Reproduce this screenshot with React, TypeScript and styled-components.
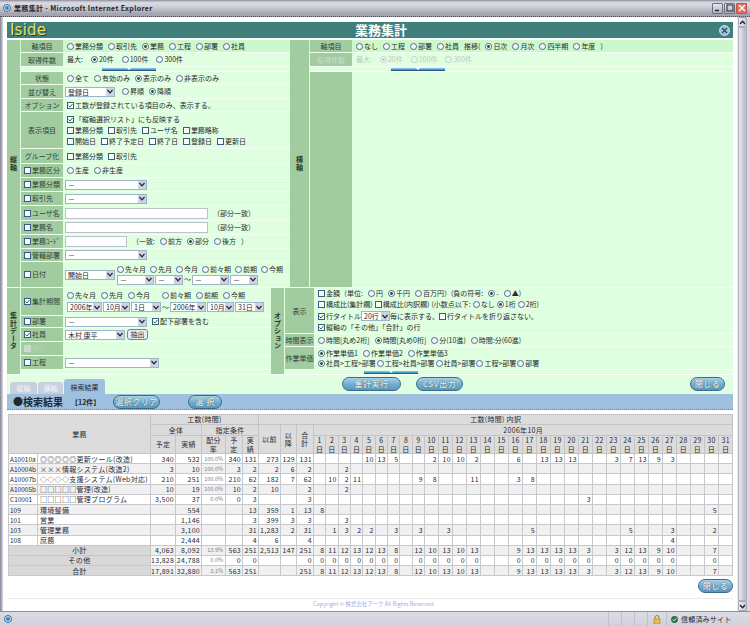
import styled, { createGlobalStyle } from "styled-components"

const FONT = `"Noto Sans CJK JP", "Liberation Sans", sans-serif`

const GlobalStyle = createGlobalStyle`
  html, body {
    margin: 0;
    padding: 0;
    overflow: hidden;
    background: #d8d8e0;
  }
  * {
    box-sizing: border-box;
  }
`

type Days = Record<number, number>

interface RowData {
  code: string
  name: string
  plan?: string
  actual?: string
  rate?: string
  plan2?: string
  actual2?: string
  before?: string
  after?: string
  total?: string
  days: Days
}

const ROWS: RowData[] = [
  { code: "A10010a", name: "◎◎◎◎◎更新ツール(改造)", plan: "340", actual: "532", rate: "100.0%", plan2: "340", actual2: "131", before: "273", after: "129", total: "131", days: { 5: 10, 6: 13, 7: 5, 10: 2, 11: 10, 12: 10, 13: 2, 16: 6, 18: 13, 19: 13, 20: 13, 23: 3, 24: 7, 25: 13, 26: 9, 27: 3 } },
  { code: "A10004b", name: "×××情報システム(改造2)", plan: "3", actual: "10", rate: "100.0%", plan2: "3", actual2: "2", before: "2", after: "6", total: "2", days: { 3: 2 } },
  { code: "A10007b", name: "◇◇◇◇支援システム(Web対応)", plan: "210", actual: "251", rate: "100.0%", plan2: "210", actual2: "62", before: "182", after: "7", total: "62", days: { 2: 10, 3: 2, 4: 11, 9: 9, 10: 8, 13: 11, 16: 3, 17: 8 } },
  { code: "A10005b", name: "□□□□□管理(改造)", plan: "10", actual: "19", rate: "100.0%", plan2: "10", actual2: "2", before: "10", total: "2", days: { 3: 2 } },
  { code: "C10001", name: "□□□□□管理プログラム", plan: "3,500", actual: "37", rate: "0.0%", plan2: "0", actual2: "3", total: "3", days: { 21: 3 } },
  { code: "109", name: "環境整備", actual: "554", actual2: "13", before: "359", after: "1", total: "13", days: { 1: 8, 30: 5 } },
  { code: "101", name: "営業", actual: "1,146", actual2: "3", before: "399", after: "3", total: "3", days: { 3: 3 } },
  { code: "103", name: "管理業務", actual: "3,100", actual2: "31", before: "1,283", after: "2", total: "31", days: { 2: 1, 3: 3, 4: 2, 5: 2, 7: 3, 9: 3, 11: 3, 17: 5, 24: 5, 27: 3, 30: 2 } },
  { code: "108", name: "庶務", actual: "2,444", actual2: "4", before: "6", total: "4", days: { 27: 4 } },
]

const SUM_DAYS: Days = { 1: 8, 2: 11, 3: 12, 4: 13, 5: 12, 6: 13, 7: 8, 9: 12, 10: 10, 11: 13, 12: 10, 13: 13, 16: 9, 17: 13, 18: 13, 19: 13, 20: 13, 21: 3, 23: 3, 24: 12, 25: 13, 26: 9, 27: 10, 30: 7 }
const ZERO_DAYS: Days = Object.fromEntries(Object.keys(SUM_DAYS).map((k) => [k, 0]))

const TOTALS = [
  { name: "小計", plan: "4,063", actual: "8,092", rate: "13.9%", plan2: "563", actual2: "251", before: "2,513", after: "147", total: "251", days: SUM_DAYS },
  { name: "その他", plan: "13,828", actual: "24,788", rate: "0.0%", plan2: "0", actual2: "0", before: "", after: "", total: "0", days: ZERO_DAYS },
  { name: "合計", plan: "17,891", actual: "32,880", rate: "3.1%", plan2: "563", actual2: "251", before: "", after: "", total: "251", days: SUM_DAYS },
]

const DAY_LIST = Array.from({ length: 31 }, (_, i) => i + 1)
const COL_WIDTHS = [29, 113, 25, 26, 24, 17, 16, 22, 16, 17]

function Radio({ on, muted, children }: { on?: boolean; muted?: boolean; children?: React.ReactNode }) {
  return (
    <Opt $muted={muted}>
      <RadioMark $on={on} $muted={muted} />
      {children}
    </Opt>
  )
}

function Check({ on, muted, children }: { on?: boolean; muted?: boolean; children?: React.ReactNode }) {
  return (
    <Opt $muted={muted}>
      <CheckMark $muted={muted}>
        {on && (
          <svg width="5" height="5" viewBox="0 0 5 5">
            <path d="M0.5 2.5 L2 4 L4.5 1" fill="none" stroke="#2a7a2a" strokeWidth="1" />
          </svg>
        )}
      </CheckMark>
      {children}
    </Opt>
  )
}

function Select({ w, children }: { w: number; children?: React.ReactNode }) {
  return (
    <SelectBox $w={w}>
      <SelectValue>{children}</SelectValue>
      <SelectArrow>
        <svg width="6" height="5" viewBox="0 0 6 5">
          <path d="M0.5 1 L3 3.8 L5.5 1" fill="none" stroke="#223" strokeWidth="1.2" />
        </svg>
      </SelectArrow>
    </SelectBox>
  )
}

function Splitter({ left }: { left: number }) {
  return (
    <SplitRow $left={left}>
      <SplitBar />
    </SplitRow>
  )
}

function DayCells({ days }: { days: Days }) {
  return (
    <>
      {DAY_LIST.map((d) => (
        <Num key={d}>{days[d]}</Num>
      ))}
    </>
  )
}

export default function App() {
  return (
    <>
      <GlobalStyle />
      <Window>
        <TitleBar>
          <IeIcon />
          <TitleText>業務集計 - Microsoft Internet Explorer</TitleText>
          <WinButtons>
            <WinButton>
              <svg width="8" height="8" viewBox="0 0 8 8">
                <path d="M1 6.5 H5" stroke="#223" strokeWidth="1.4" />
              </svg>
            </WinButton>
            <WinButton>
              <svg width="8" height="8" viewBox="0 0 8 8">
                <rect x="1" y="1" width="6" height="6" fill="none" stroke="#223" strokeWidth="1" />
              </svg>
            </WinButton>
            <WinButton $close>
              <svg width="8" height="8" viewBox="0 0 8 8">
                <path d="M1 1 L7 7 M7 1 L1 7" stroke="#fff" strokeWidth="1.4" />
              </svg>
            </WinButton>
          </WinButtons>
        </TitleBar>

        <Client>
          <Page>
            <Header>
              <Logo>Iside</Logo>
              <HeaderTitle>業務集計</HeaderTitle>
              <HeaderClose>
                <svg width="11" height="11" viewBox="0 0 11 11">
                  <circle cx="5.5" cy="5.5" r="5" fill="#9cc4d8" stroke="#dcecf4" strokeWidth="0.8" />
                  <path d="M3 3 L8 8 M8 3 L3 8" stroke="#2c4a5c" strokeWidth="1.2" />
                </svg>
              </HeaderClose>
            </Header>

            <AxisPanel>
              <SideLabel $w={13}>縦軸</SideLabel>
              <Rows $w={270}>
                <Row $h={13} $strong>
                  <RowLabel $center>軸項目</RowLabel>
                  <RowBody>
                    <Radio>業務分類</Radio>
                    <Radio>取引先</Radio>
                    <Radio on>業務</Radio>
                    <Radio>工程</Radio>
                    <Radio>部署</Radio>
                    <Radio>社員</Radio>
                  </RowBody>
                </Row>
                <Row $h={14}>
                  <RowLabel $center>取得件数</RowLabel>
                  <RowBody $gap={8}>
                    <Plain>最大:</Plain>
                    <Radio on>20件</Radio>
                    <Radio>100件</Radio>
                    <Radio>300件</Radio>
                  </RowBody>
                </Row>
                <Splitter left={39} />
                <Row $h={13}>
                  <RowLabel $center>状態</RowLabel>
                  <RowBody>
                    <Radio>全て</Radio>
                    <Radio>有効のみ</Radio>
                    <Radio on>表示のみ</Radio>
                    <Radio>非表示のみ</Radio>
                  </RowBody>
                </Row>
                <Row $h={14}>
                  <RowLabel $center>並び替え</RowLabel>
                  <RowBody $tight>
                    <Select w={50}>登録日</Select>
                    <RadioPair>
                      <Radio>昇順</Radio>
                      <Radio on>降順</Radio>
                    </RadioPair>
                  </RowBody>
                </Row>
                <Row $h={13}>
                  <RowLabel $center>オプション</RowLabel>
                  <RowBody>
                    <Check on>工数が登録されている項目のみ、表示する。</Check>
                  </RowBody>
                </Row>
                <Row $h={37}>
                  <RowLabel $center>表示項目</RowLabel>
                  <RowStackBody>
                    <Line>
                      <Check on>「縦軸選択リスト」にも反映する</Check>
                    </Line>
                    <Line>
                      <Check>業務分類</Check>
                      <Check>取引先</Check>
                      <Check>ユーザ名</Check>
                      <Check>業務略称</Check>
                    </Line>
                    <Line>
                      <Check>開始日</Check>
                      <Check>終了予定日</Check>
                      <Check>終了日</Check>
                      <Check>登録日</Check>
                      <Check>更新日</Check>
                    </Line>
                  </RowStackBody>
                </Row>
                <Row $h={15}>
                  <RowLabel $center>グループ化</RowLabel>
                  <RowBody>
                    <Check>業務分類</Check>
                    <Check>取引先</Check>
                  </RowBody>
                </Row>
                <Row $h={14}>
                  <RowLabel><Check>業務区分</Check></RowLabel>
                  <RowBody>
                    <Radio>生産</Radio>
                    <Radio>非生産</Radio>
                  </RowBody>
                </Row>
                <Row $h={14}>
                  <RowLabel><Check>業務分類</Check></RowLabel>
                  <RowBody $tight>
                    <Select w={82}>－</Select>
                  </RowBody>
                </Row>
                <Row $h={14}>
                  <RowLabel><Check>取引先</Check></RowLabel>
                  <RowBody $tight>
                    <Select w={82}>－</Select>
                  </RowBody>
                </Row>
                <Row $h={15}>
                  <RowLabel><Check>ユーザ名</Check></RowLabel>
                  <RowBody $tight>
                    <TextBox $w={143} />
                    <Plain>（部分一致）</Plain>
                  </RowBody>
                </Row>
                <Row $h={14}>
                  <RowLabel><Check>業務名</Check></RowLabel>
                  <RowBody $tight>
                    <TextBox $w={143} />
                    <Plain>（部分一致）</Plain>
                  </RowBody>
                </Row>
                <Row $h={14}>
                  <RowLabel><Check>業務ｺｰﾄﾞ</Check></RowLabel>
                  <RowBody $tight>
                    <TextBox $w={62} />
                    <Plain>（一致:</Plain>
                    <Radio>前方</Radio>
                    <Radio on>部分</Radio>
                    <Radio>後方</Radio>
                    <Plain>）</Plain>
                  </RowBody>
                </Row>
                <Row $h={13}>
                  <RowLabel><Check>管轄部署</Check></RowLabel>
                  <RowBody $tight>
                    <Select w={82}>－</Select>
                  </RowBody>
                </Row>
                <Row $h={26}>
                  <RowLabel><Check>日付</Check></RowLabel>
                  <RowBody $tight>
                    <Select w={50}>開始日</Select>
                    <DateColumn>
                      <Line $gap={4}>
                        <Radio>先々月</Radio>
                        <Radio>先月</Radio>
                        <Radio>今月</Radio>
                        <Radio>前々期</Radio>
                        <Radio>前期</Radio>
                        <Radio>今期</Radio>
                      </Line>
                      <Line $gap={1}>
                        <Select w={37}>－</Select>
                        <Select w={28}>－</Select>
                        <Plain>～</Plain>
                        <Select w={37}>－</Select>
                        <Select w={28}>－</Select>
                      </Line>
                    </DateColumn>
                  </RowBody>
                </Row>
              </Rows>
              <SideLabel $w={19}>横軸</SideLabel>
              <Rows $w={424}>
                <Row $h={13} $strong>
                  <RowLabel $center>軸項目</RowLabel>
                  <RowBody>
                    <Radio>なし</Radio>
                    <Radio>工程</Radio>
                    <Radio>部署</Radio>
                    <Radio>社員</Radio>
                    <Plain>推移(</Plain>
                    <Radio on>日次</Radio>
                    <Radio>月次</Radio>
                    <Radio>四半期</Radio>
                    <Radio>年度</Radio>
                    <Plain>)</Plain>
                  </RowBody>
                </Row>
                <Row $h={14}>
                  <RowLabel $center $muted>取得件数</RowLabel>
                  <RowBody $gap={8}>
                    <Plain $muted>最大:</Plain>
                    <Radio on muted>20件</Radio>
                    <Radio muted>100件</Radio>
                    <Radio muted>300件</Radio>
                  </RowBody>
                </Row>
                <Splitter left={39} />
                <Row $h={216}>
                  <RowLabel />
                  <RowBody />
                </Row>
              </Rows>
            </AxisPanel>

            <AxisPanel $h={87}>
              <SideLabel $w={13}>集計データ</SideLabel>
              <Rows $w={251}>
                <Row $h={28}>
                  <RowLabel><Check on>集計期間</Check></RowLabel>
                  <RowStackBody>
                    <Line>
                      <Radio>先々月</Radio>
                      <Radio>先月</Radio>
                      <Radio>今月</Radio>
                      <PeriodGap />
                      <Radio>前々期</Radio>
                      <Radio>前期</Radio>
                      <Radio>今期</Radio>
                    </Line>
                    <Line $gap={1}>
                      <Select w={35}>2006年</Select>
                      <Select w={27}>10月</Select>
                      <Select w={30}>1日</Select>
                      <Plain>～</Plain>
                      <Select w={36}>2006年</Select>
                      <Select w={27}>10月</Select>
                      <Select w={29}>31日</Select>
                    </Line>
                  </RowStackBody>
                </Row>
                <Row $h={12}>
                  <RowLabel><Check>部署</Check></RowLabel>
                  <RowBody $tight>
                    <Select w={82}>－</Select>
                    <Check on>配下部署を含む</Check>
                  </RowBody>
                </Row>
                <Row $h={14}>
                  <RowLabel><Check on>社員</Check></RowLabel>
                  <RowBody $tight $gap={2}>
                    <Select w={60}>木村 康平</Select>
                    <SmallButton>抽出</SmallButton>
                  </RowBody>
                </Row>
                <Row $h={14}>
                  <RowLabel><Check muted>案件</Check></RowLabel>
                  <RowBody />
                </Row>
                <Row $h={14}>
                  <RowLabel><Check>工程</Check></RowLabel>
                  <RowBody $tight>
                    <Select w={94}>－</Select>
                  </RowBody>
                </Row>
              </Rows>
              <SideLabel $w={13}>オプション</SideLabel>
              <Rows $w={449} $labelW={29}>
                <Row $h={46}>
                  <RowLabel $center>表示</RowLabel>
                  <RowStackBody>
                    <Line>
                      <Check>金額（単位:</Check>
                      <Radio>円</Radio>
                      <Radio on>千円</Radio>
                      <Radio>百万円）(負の符号:</Radio>
                      <Radio on>-</Radio>
                      <Radio>▲)</Radio>
                    </Line>
                    <Line $gap={2}>
                      <Check>構成比(集計欄)</Check>
                      <Check>構成比(内訳欄)</Check>
                      <Plain>(小数点以下:</Plain>
                      <Radio>なし</Radio>
                      <Radio on>1桁</Radio>
                      <Radio>2桁)</Radio>
                    </Line>
                    <Line $gap={0}>
                      <Check on>行タイトル</Check>
                      <Select w={29}>20行</Select>
                      <Plain>毎に表示する。</Plain>
                      <Check>行タイトルを折り返さない。</Check>
                    </Line>
                    <Line>
                      <Check on>縦軸の「その他」「合計」の行</Check>
                    </Line>
                  </RowStackBody>
                </Row>
                <Row $h={13}>
                  <RowLabel $center>時間表示</RowLabel>
                  <RowBody>
                    <Radio>時間[丸め2桁]</Radio>
                    <Radio on>時間[丸め0桁]</Radio>
                    <Radio>分(10進)</Radio>
                    <Radio>時間:分(60進)</Radio>
                  </RowBody>
                </Row>
                <Row $h={23}>
                  <RowLabel $center>作業単価</RowLabel>
                  <RowStackBody $gap={1}>
                    <Line>
                      <Radio on>作業単価1</Radio>
                      <Radio>作業単価2</Radio>
                      <Radio>作業単価3</Radio>
                    </Line>
                    <Line $gap={1}>
                      <Radio on>社員&gt;工程&gt;部署</Radio>
                      <Radio>工程&gt;社員&gt;部署</Radio>
                      <Radio>社員&gt;部署</Radio>
                      <Radio>工程&gt;部署</Radio>
                      <Radio>部署</Radio>
                    </Line>
                  </RowStackBody>
                </Row>
                <Splitter left={50} />
              </Rows>
            </AxisPanel>

            <ActionBar>
              <Tabs>
                <Tab $w={27}>縦軸</Tab>
                <Tab $w={25}>横軸</Tab>
                <Tab $w={41} $active>検索結果</Tab>
              </Tabs>
              <ActionButtons>
                <PillButton $w={59}>集計実行</PillButton>
                <PillButton $w={47}>CSV出力</PillButton>
                <PillButton $w={35} $end>閉じる</PillButton>
              </ActionButtons>
            </ActionBar>

            <ResultBar>
              <ResultTitle>●検索結果</ResultTitle>
              <ResultCount>【12件】</ResultCount>
              <PillButton $w={47}>選択クリア</PillButton>
              <PillButton $w={34}>選 択</PillButton>
            </ResultBar>

            <ResultTable>
              <colgroup>
                {COL_WIDTHS.map((w, i) => (
                  <col key={i} width={w} />
                ))}
                {DAY_LIST.map((d) => (
                  <col key={d} width={d < 10 ? 12.33 : 14} />
                ))}
              </colgroup>
              <thead>
                <HeadRow $h={10}>
                  <Head colSpan={2} rowSpan={3}>業務</Head>
                  <Head colSpan={5}>工数(時間)</Head>
                  <Head colSpan={34}>工数(時間) 内訳</Head>
                </HeadRow>
                <HeadRow $h={11}>
                  <Head colSpan={2}>全体</Head>
                  <Head colSpan={3}>指定条件</Head>
                  <Head rowSpan={2}>以前</Head>
                  <Head rowSpan={2}>以<br />降</Head>
                  <Head rowSpan={2}>合<br />計</Head>
                  <Head colSpan={31}>2006年10月</Head>
                </HeadRow>
                <HeadRow $h={18}>
                  <Head>予定</Head>
                  <Head>実績</Head>
                  <Head>配分<br />率</Head>
                  <Head>予<br />定</Head>
                  <Head>実<br />績</Head>
                  {DAY_LIST.map((d) => (
                    <Head key={d}>{d}<br />日</Head>
                  ))}
                </HeadRow>
              </thead>
              <tbody>
                {ROWS.map((row, i) => (
                  <DataRow key={row.code} $alt={i % 2 === 1}>
                    <Code>{row.code}</Code>
                    <Name>{row.name}</Name>
                    <Num>{row.plan}</Num>
                    <Num>{row.actual}</Num>
                    <Rate>{row.rate}</Rate>
                    <Num>{row.plan2}</Num>
                    <Num>{row.actual2}</Num>
                    <Num>{row.before}</Num>
                    <Num>{row.after}</Num>
                    <Num>{row.total}</Num>
                    <DayCells days={row.days} />
                  </DataRow>
                ))}
                {TOTALS.map((row, i) => (
                  <DataRow key={row.name} $alt={i % 2 === 0}>
                    <TotalName colSpan={2}>{row.name}</TotalName>
                    <Num>{row.plan}</Num>
                    <Num>{row.actual}</Num>
                    <Rate>{row.rate}</Rate>
                    <Num>{row.plan2}</Num>
                    <Num>{row.actual2}</Num>
                    <Num>{row.before}</Num>
                    <Num>{row.after}</Num>
                    <Num>{row.total}</Num>
                    <DayCells days={row.days} />
                  </DataRow>
                ))}
              </tbody>
            </ResultTable>

            <TableFoot>
              <PillButton $w={35}>閉じる</PillButton>
            </TableFoot>
            <Copyright>Copyright © 株式会社アーク All Rights Reserved.</Copyright>
          </Page>
          <ScrollBar>
            <ScrollButton>
              <svg width="7" height="5" viewBox="0 0 7 5">
                <path d="M1 4 L3.5 1.2 L6 4" fill="none" stroke="#223" strokeWidth="1.3" />
              </svg>
            </ScrollButton>
            <ScrollThumb />
            <ScrollButton>
              <svg width="7" height="5" viewBox="0 0 7 5">
                <path d="M1 1 L3.5 3.8 L6 1" fill="none" stroke="#223" strokeWidth="1.3" />
              </svg>
            </ScrollButton>
          </ScrollBar>
        </Client>

        <StatusBar>
          <IeIcon />
          <StatusCells>
            <StatusCell $w={13} />
            <StatusCell $w={13} />
            <StatusCell $w={13} />
            <StatusCell $w={19}>
              <svg width="8" height="9" viewBox="0 0 8 9">
                <path d="M2 4 V2.5 A2 2 0 0 1 6 2.5 V4" fill="none" stroke="#a08020" strokeWidth="1" />
                <rect x="1" y="4" width="6" height="5" fill="#e8c040" stroke="#a08020" strokeWidth="0.6" />
              </svg>
            </StatusCell>
            <StatusZone>
              <svg width="7" height="7" viewBox="0 0 7 7">
                <circle cx="3.5" cy="3.5" r="3.4" fill="#2a7040" />
                <path d="M1.8 3.6 L3 4.8 L5.2 2.2" fill="none" stroke="#fff" strokeWidth="0.9" />
              </svg>
              信頼済みサイト
            </StatusZone>
          </StatusCells>
        </StatusBar>
      </Window>
    </>
  )
}

const Window = styled.div`
  width: 750px;
  height: 626px;
  display: flex;
  flex-direction: column;
  overflow: hidden;
  background: #d8d8e0;
  font-family: ${FONT};
  font-size: 7px;
  color: #2a2a30;
`

const TitleBar = styled.div`
  height: 17px;
  flex: none;
  display: flex;
  align-items: center;
  gap: 3px;
  padding: 0 3px 0 3px;
  background: linear-gradient(#80808c 0, #b8b8c4 1px, #dcdce4 3px, #c8c8d2 8px, #a4a4b0 14px, #a4a4b0 15px);
  border-bottom: 1px dotted #505058;
`

const IeIcon = styled.span`
  width: 8px;
  height: 8px;
  flex: none;
  border-radius: 50%;
  background: #3a80c8;
  border: 2px solid #d8ecf8;
  outline: 1px solid #30608c;
  outline-offset: -1px;
`

const TitleText = styled.span`
  font-size: 7px;
  font-weight: 700;
  letter-spacing: 0.35px;
  color: #26262c;
`

const WinButtons = styled.div`
  margin-left: auto;
  display: flex;
  gap: 1px;
`

const WinButton = styled.div<{ $close?: boolean }>`
  width: 11px;
  height: 11px;
  display: flex;
  align-items: center;
  justify-content: center;
  border: 1px solid ${(p) => (p.$close ? "#c05040" : "#70707c")};
  border-radius: 1px;
  background: ${(p) => (p.$close ? "#e07060" : "linear-gradient(#e4e4ec, #b0b0bc)")};
`

const Client = styled.div`
  flex: 1;
  display: flex;
  min-height: 0;
  padding: 0 3px;
  background: linear-gradient(to right, #808090 0, #c0c0cc 2px, #d8d8e0 3px);
`

const Page = styled.div`
  width: 734px;
  flex: none;
  padding: 5px 4px 0;
  background: #fff;
`

const Header = styled.div`
  height: 16px;
  margin-bottom: 2px;
  padding-left: 22px;
  display: flex;
  align-items: center;
  justify-content: center;
  position: relative;
  background: #3f7f7c;
`

const Logo = styled.span`
  position: absolute;
  left: 3px;
  top: 0;
  font-family: "DejaVu Sans", sans-serif;
  font-size: 15px;
  line-height: 16px;
  letter-spacing: 0.2px;
  color: #f0e060;
  text-shadow: 1px 1px 0 #1c3c3a;
`

const HeaderTitle = styled.span`
  font-size: 13px;
  font-weight: 700;
  line-height: 16px;
  color: #fff;
`

const HeaderClose = styled.span`
  position: absolute;
  right: 3px;
  top: 3px;
  height: 11px;
`

const AxisPanel = styled.div<{ $h?: number }>`
  height: ${(p) => p.$h ?? 248}px;
  display: flex;
  background: #e0ffe0;
  border-bottom: 1px solid #f4fff4;
`

const SideLabel = styled.div<{ $w: number }>`
  width: ${(p) => p.$w}px;
  flex: none;
  display: flex;
  align-items: center;
  justify-content: center;
  writing-mode: vertical-rl;
  font-weight: 700;
  font-size: 7px;
  letter-spacing: 0.5px;
  color: #283828;
  background: #a0cca0;
`

const Rows = styled.div<{ $w: number; $labelW?: number }>`
  width: ${(p) => p.$w}px;
  flex: none;
  display: flex;
  flex-direction: column;
  --label-w: ${(p) => p.$labelW ?? 42}px;
`

const Row = styled.div<{ $h: number; $strong?: boolean }>`
  height: ${(p) => p.$h}px;
  flex: none;
  display: flex;
  border-bottom: 1px solid #f4fff4;
  background: ${(p) => (p.$strong ? "#ccf8cc" : "#e0ffe0")};
`

const RowLabel = styled.div<{ $center?: boolean; $muted?: boolean }>`
  width: var(--label-w);
  flex: none;
  display: flex;
  align-items: center;
  justify-content: ${(p) => (p.$center ? "center" : "flex-start")};
  padding-left: ${(p) => (p.$center ? 0 : 3)}px;
  margin-left: 1px;
  white-space: nowrap;
  color: ${(p) => (p.$muted ? "#c8dcc8" : "#30403a")};
  background: #a0cca0;
`

const RowBody = styled.div<{ $gap?: number; $tight?: boolean }>`
  flex: 1;
  display: flex;
  align-items: center;
  gap: ${(p) => p.$gap ?? 5}px;
  padding-left: ${(p) => (p.$tight ? 2 : 4)}px;
  white-space: nowrap;
`

const RowStackBody = styled.div<{ $gap?: number }>`
  flex: 1;
  display: flex;
  flex-direction: column;
  justify-content: center;
  gap: ${(p) => p.$gap ?? 2}px;
  padding-left: 4px;
`

const Line = styled.div<{ $gap?: number }>`
  display: flex;
  align-items: center;
  gap: ${(p) => p.$gap ?? 5}px;
  min-height: 9px;
  white-space: nowrap;
`

const DateColumn = styled.div`
  display: flex;
  flex-direction: column;
  gap: 1px;
  margin-left: -3px;
`

const RadioPair = styled.div`
  display: flex;
  gap: 5px;
  margin-left: 2px;
`

const PeriodGap = styled.span`
  width: 2px;
`

const Opt = styled.label<{ $muted?: boolean }>`
  display: inline-flex;
  align-items: center;
  gap: 1px;
  line-height: 9px;
  white-space: nowrap;
  color: ${(p) => (p.$muted ? "#b8ccb8" : "inherit")};
`

const Plain = styled.span<{ $muted?: boolean }>`
  line-height: 9px;
  color: ${(p) => (p.$muted ? "#b8ccb8" : "inherit")};
`

const RadioMark = styled.span<{ $on?: boolean; $muted?: boolean }>`
  width: 7px;
  height: 7px;
  flex: none;
  display: inline-block;
  border-radius: 50%;
  border: 1px solid ${(p) => (p.$muted ? "#c0d0d0" : "#4c6c90")};
  background: ${(p) =>
    p.$on
      ? `radial-gradient(circle, ${p.$muted ? "#b8ccb8" : "#2a5a30"} 0 1.2px, #fff 1.6px)`
      : p.$muted
        ? "transparent"
        : "#f4f8fc"};
`

const CheckMark = styled.span<{ $muted?: boolean }>`
  width: 7px;
  height: 7px;
  flex: none;
  display: inline-flex;
  align-items: center;
  justify-content: center;
  border: 1px solid ${(p) => (p.$muted ? "#c8dcc8" : "#3c5c88")};
  background: ${(p) => (p.$muted ? "#c8dcc8" : "#f8fafc")};
`

const SelectBox = styled.div<{ $w: number }>`
  width: ${(p) => p.$w}px;
  height: 10px;
  flex: none;
  display: flex;
  align-items: stretch;
  border: 1px solid #a0b4c8;
  background: #fff;
`

const SelectValue = styled.span`
  flex: 1;
  min-width: 0;
  padding-left: 2px;
  overflow: hidden;
  line-height: 8px;
  white-space: nowrap;
`

const SelectArrow = styled.span`
  width: 8px;
  flex: none;
  display: flex;
  align-items: center;
  justify-content: center;
  background: #ccd4e4;
`

const TextBox = styled.div<{ $w: number }>`
  width: ${(p) => p.$w}px;
  height: 11px;
  flex: none;
  border: 1px solid #b8c4c8;
  background: #fff;
`

const SmallButton = styled.div`
  width: 21px;
  height: 11px;
  display: flex;
  align-items: center;
  justify-content: center;
  border: 1px solid #6884a8;
  border-radius: 3px;
  background: #e8eef4;
  line-height: 9px;
`

const SplitRow = styled.div<{ $left: number }>`
  height: 5px;
  flex: none;
  padding-left: calc(var(--label-w) + 1px + ${(p) => p.$left}px);
  border-bottom: 1px solid #f8fff8;
`

const SplitBar = styled.div`
  width: 54px;
  height: 3px;
  margin-top: 1px;
  position: relative;
  background: linear-gradient(#90d0f0, #3090c0);
  border-bottom: 1px solid #305880;

  &::after {
    content: "";
    position: absolute;
    left: 25px;
    top: 0;
    border-left: 2px solid transparent;
    border-right: 2px solid transparent;
    border-top: 2px solid #fff;
  }
`

const ActionBar = styled.div`
  height: 19px;
  display: flex;
  background: #e0ffe0;
`

const Tabs = styled.div`
  width: 100px;
  flex: none;
  display: flex;
  align-items: flex-end;
  gap: 1px;
  padding-left: 3px;
`

const Tab = styled.div<{ $w: number; $active?: boolean }>`
  width: ${(p) => p.$w}px;
  height: ${(p) => (p.$active ? 15 : 12)}px;
  display: flex;
  align-items: center;
  justify-content: center;
  border-radius: 3px 3px 0 0;
  color: ${(p) => (p.$active ? "#202c3c" : "#f0f4f8")};
  background: ${(p) => (p.$active ? "#a0c0e0" : "#c8d0dc")};
`

const ActionButtons = styled.div`
  flex: 1;
  display: flex;
  align-items: center;
  gap: 15px;
  padding: 0 8px 2px 235px;
`

const PillButton = styled.div<{ $w: number; $end?: boolean }>`
  width: ${(p) => p.$w}px;
  height: 14px;
  flex: none;
  margin-left: ${(p) => (p.$end ? "auto" : 0)};
  display: flex;
  align-items: center;
  justify-content: center;
  border: 1px solid #3c6c88;
  border-radius: 7px;
  font-size: 8px;
  font-weight: 700;
  line-height: 10px;
  letter-spacing: 0.5px;
  white-space: nowrap;
  color: #d8e4ea;
  text-shadow: 0 0 1px #20404c;
  background: linear-gradient(#a4d4ec, #70acd0 55%, #5c98bc);
`

const ResultBar = styled.div`
  height: 16px;
  display: flex;
  align-items: center;
  padding-left: 6px;
  background: #a0c0e0;
  border-bottom: 1px dotted #708090;
`

const ResultTitle = styled.span`
  width: 58px;
  font-size: 10px;
  font-weight: 700;
  color: #202830;
`

const ResultCount = styled.span`
  width: 42px;
  font-size: 7px;
  font-weight: 700;
  color: #202830;

  & + ${PillButton} {
    margin-right: 28px;
  }
`

const ResultTable = styled.table`
  width: 724px;
  margin: 4px 0 0 1px;
  table-layout: fixed;
  border-collapse: collapse;
  border-bottom: 1px solid #a0c0b8;
  font-size: 7px;
  line-height: 8px;
`

const HeadRow = styled.tr<{ $h: number }>`
  height: ${(p) => p.$h}px;
`

const Head = styled.th`
  padding: 0;
  font-weight: 400;
  line-height: 8.5px;
  text-align: center;
  letter-spacing: 0.3px;
  border: 1px solid #c4c4c8;
  background: #dcdcdc;
`

const DataRow = styled.tr<{ $alt?: boolean }>`
  height: 10.2px;
  background: ${(p) => (p.$alt ? "#f0f0f0" : "#fff")};
`

const Code = styled.td`
  padding: 0 0 0 1px;
  font-size: 6.5px;
  white-space: nowrap;
  overflow: hidden;
  border: 1px solid #c8c8cc;
`

const Name = styled.td`
  padding: 0 0 0 2px;
  letter-spacing: 0.3px;
  white-space: nowrap;
  overflow: hidden;
  border: 1px solid #c8c8cc;
`

const Num = styled.td`
  padding: 0 1px 0 0;
  font-size: 7px;
  letter-spacing: 0.3px;
  text-align: right;
  white-space: nowrap;
  border: 1px solid #c8c8cc;
`

const Rate = styled(Num)`
  font-size: 5.5px;
  letter-spacing: 0;
  padding-right: 2px;
  color: #808088;
`

const TotalName = styled.td`
  padding: 0;
  text-align: center;
  letter-spacing: 0.3px;
  border: 1px solid #c8c8cc;
  background: #d8d8d8;
`

const TableFoot = styled.div`
  height: 23px;
  display: flex;
  justify-content: flex-end;
  align-items: flex-start;
  padding-top: 3px;
  border-bottom: 1px solid #eaeaea;
`

const Copyright = styled.div`
  padding: 1px 0 0 306px;
  font-size: 5.5px;
  line-height: 8px;
  color: #a4aed8;
`

const ScrollBar = styled.div`
  width: 10px;
  flex: none;
  display: flex;
  flex-direction: column;
  padding-left: 1px;
  background: #eceef2;
`

const ScrollButton = styled.div`
  height: 10px;
  flex: none;
  display: flex;
  align-items: center;
  justify-content: center;
  border: 1px solid #a8a8b4;
  border-radius: 1px;
  background: linear-gradient(to right, #f0f0f4, #c8c8d4);
`

const ScrollThumb = styled.div`
  flex: 1;
  background: linear-gradient(to right, #ececf2, #d0d0dc 45%, #b8b8c6);
  border: 1px solid #b0b0bc;
`

const StatusBar = styled.div`
  height: 15px;
  flex: none;
  display: flex;
  align-items: center;
  padding: 0 3px 0 4px;
  background: linear-gradient(#dcdce4, #d0d0d8);
  border-top: 1px solid #909098;
`

const StatusCells = styled.div`
  margin-left: auto;
  height: 100%;
  display: flex;
  align-items: stretch;
`

const StatusCell = styled.div<{ $w: number }>`
  width: ${(p) => p.$w}px;
  display: flex;
  align-items: center;
  justify-content: center;
  border-left: 1px solid #c0c0c8;
`

const StatusZone = styled.div`
  width: 81px;
  display: flex;
  align-items: center;
  gap: 3px;
  padding-left: 4px;
  letter-spacing: 0.2px;
  border-left: 1px solid #c0c0c8;
`
